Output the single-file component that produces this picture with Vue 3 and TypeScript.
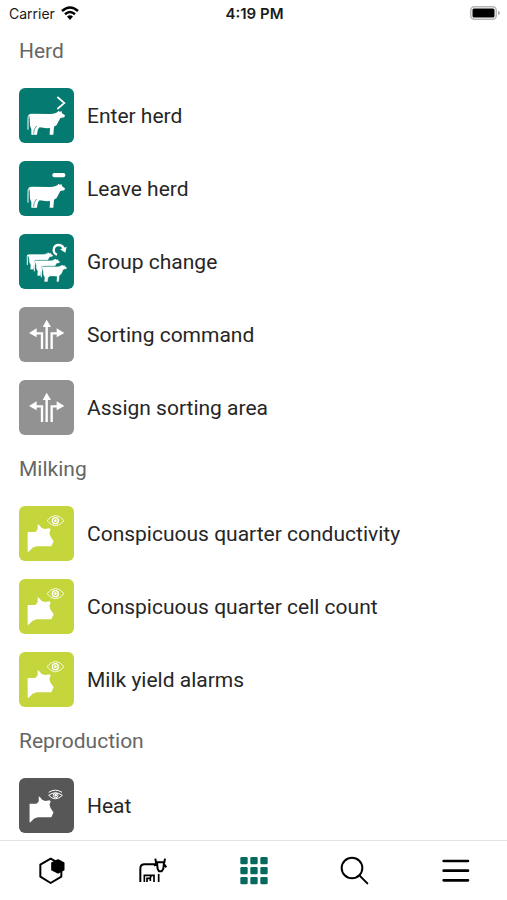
<script setup lang="ts">
type IconName = 'enter' | 'leave' | 'group' | 'sort' | 'watch' | 'heat'

interface Entry {
  label: string
  icon: IconName
}

interface Section {
  title: string
  tone: string
  entries: Entry[]
}

const sections: Section[] = [
  {
    title: 'Herd',
    tone: 'teal',
    entries: [
      { label: 'Enter herd', icon: 'enter' },
      { label: 'Leave herd', icon: 'leave' },
      { label: 'Group change', icon: 'group' },
      { label: 'Sorting command', icon: 'sort' },
      { label: 'Assign sorting area', icon: 'sort' },
    ],
  },
  {
    title: 'Milking',
    tone: 'lime',
    entries: [
      { label: 'Conspicuous quarter conductivity', icon: 'watch' },
      { label: 'Conspicuous quarter cell count', icon: 'watch' },
      { label: 'Milk yield alarms', icon: 'watch' },
    ],
  },
  {
    title: 'Reproduction',
    tone: 'dark',
    entries: [{ label: 'Heat', icon: 'heat' }],
  },
]

const toneOf = (section: Section, entry: Entry): string =>
  entry.icon === 'sort' ? 'grey' : section.tone

const gridCells = [0, 1, 2, 3, 4, 5, 6, 7, 8].map((i) => ({
  x: 60 + (i % 3) * 30,
  y: 66 + Math.floor(i / 3) * 30,
}))
</script>

<template>
  <div class="screen">
    <svg class="defs" aria-hidden="true">
      <symbol id="cow" viewBox="0 0 120 80" overflow="visible">
        <path
          d="M4 9 Q6 6 12 6 L66 7 Q78 7 84 4 L90 1 L92 -3 L96 0 L102 -1 L103 5 L112 11 L110 17 L98 19 L92 30 L87 40 L79 45 L77 69 L66 69 L67 49 L58 50 L36 47 L31 53 L29 62 L28 69 L11 69 L11 53 L7 42 L6 20 Z"
          fill="#fff"
        />
        <path d="M5 9 Q0 14 1 24 L1 54" fill="none" stroke="#fff" stroke-width="3" />
        <path d="M18 66 L20 53 L27 43" fill="none" stroke="var(--tone)" stroke-width="2" />
      </symbol>
      <symbol id="cow-small" viewBox="0 0 80 52" overflow="visible">
        <path
          d="M1 4 Q3 1 8 1 H48 Q56 1 60 -2 L64 -4 L67 -2 L72 -3 L73 1 L79 5 L77 9 L68 11 L62 24 L56 29 L54 48 H46 L47 32 L28 31 L22 35 L21 48 H9 L10 34 L6 26 L5 13 Z"
          fill="#fff"
          stroke="var(--tone)"
          stroke-width="2"
        />
        <path d="M2 4 Q0 8 1 14 V34" fill="none" stroke="#fff" stroke-width="3" />
      </symbol>
    </svg>

    <header class="status">
      <div class="carrier">
        <span>Carrier</span>
        <svg class="wifi" viewBox="0 0 18 14" aria-label="Wi-Fi">
          <path d="M1 5 Q9 -2 17 5" fill="none" stroke="#000" stroke-width="2.6" />
          <path d="M4 8.200 Q9 3.700 14 8.200" fill="none" stroke="#000" stroke-width="2.500" />
          <path d="M6 10.600 Q9 8 12 10.600 L9 14 Z" />
        </svg>
      </div>
      <time class="clock">4:19 PM</time>
      <svg class="battery" viewBox="0 0 30 14" aria-label="Battery full">
        <rect x="0.750" y="0.750" width="25.500" height="12.500" rx="3.500" fill="#fff" stroke="#b5b5b5" stroke-width="1.500" />
        <rect x="2.500" y="2.500" width="22" height="9" rx="1.500" />
        <path d="M28 4.800 Q30 5.500 30 7 Q30 8.500 28 9.200 Z" fill="#aaa" />
      </svg>
    </header>

    <main class="content">
      <section v-for="section in sections" :key="section.title" class="section">
        <h2 class="title">{{ section.title }}</h2>
        <ul class="list">
          <li v-for="entry in section.entries" :key="entry.label">
            <button type="button" class="row">
              <span class="tile" :class="toneOf(section, entry)">
                <svg viewBox="15 16 165 165" aria-hidden="true">
                  <template v-if="entry.icon === 'enter'">
                    <use href="#cow" x="41" y="87" width="120" height="80" />
                    <path d="M130 43 L151 61 L130 79" fill="none" stroke="#fff" stroke-width="5" />
                  </template>
                  <template v-else-if="entry.icon === 'leave'">
                    <use href="#cow" x="41" y="87" width="120" height="80" />
                    <rect x="115" y="52" width="39" height="13" rx="6" fill="#fff" />
                  </template>
                  <template v-else-if="entry.icon === 'group'">
                    <use href="#cow-small" x="39" y="75" width="80" height="52" />
                    <use href="#cow-small" x="60" y="94" width="80" height="52" />
                    <use href="#cow-small" x="81" y="112" width="80" height="52" />
                    <path d="M129 78 A15 15 0 1 1 149 62" fill="none" stroke="#fff" stroke-width="7" />
                    <path d="M138 62 L158 54 L154 72 Z" fill="#fff" />
                  </template>
                  <template v-else-if="entry.icon === 'sort'">
                    <path d="M98 142 V72 M84 142 V95 H64 M113 142 V95 H133" fill="none" stroke="#fff" stroke-width="7" />
                    <path d="M98 54 L111 76 H86 Z M45 94 L68 80 V107 Z M151 94 L128 80 V107 Z" fill="#fff" />
                  </template>
                  <template v-else>
                    <path
                      d="M71 70 L76 74 L83 82 L93 85 L106 83 L110 87 L106 96 L109 107 L119 122 L112 137 H68 L56 141 L43 154 L41 152 V94 H64 L71 86 Z"
                      fill="#fff"
                      :transform="entry.icon === 'heat' ? 'translate(9 5) scale(.92 .94)' : undefined"
                    />
                    <g v-if="entry.icon === 'watch'" fill="none" stroke="#fff">
                      <path d="M99 60 Q124 29 150 60 Q124 91 99 60 Z" stroke-width="2.500" />
                      <circle cx="124" cy="60" r="9" stroke-width="4" />
                      <circle cx="124" cy="60" r="2" stroke-width="4" />
                    </g>
                    <g v-else fill="none" stroke="#fff" stroke-width="3">
                      <path d="M104 59 Q124 46 144 59 M104 68 Q124 53 145 68 Q124 89 104 68 Z" />
                      <circle cx="125" cy="68" r="7" />
                      <circle cx="125" cy="68" r="2" stroke-width="4" />
                    </g>
                  </template>
                </svg>
              </span>
              <span class="label">{{ entry.label }}</span>
            </button>
          </li>
        </ul>
      </section>
    </main>

    <nav class="tabs" aria-label="Main">
      <button type="button" class="tab" aria-label="Overview">
        <svg viewBox="47 63 90 90">
          <path d="M91 71 L123 89 V125 L91 144 L60 125 V89 Z" fill="none" stroke="#000" stroke-width="6" stroke-linejoin="round" />
          <path d="M113 75 L130 84 V104 L113 113 L95 104 V84 Z" stroke="#000" stroke-width="5" stroke-linejoin="round" />
        </svg>
      </button>
      <button type="button" class="tab" aria-label="Animals">
        <svg viewBox="351 63 90 90" fill="none" stroke="#000" stroke-width="6">
          <path d="M361 141 V101 Q361 88 374 88 H407" />
          <path d="M373 141 V121 H402 V141 M381 141 V130 H390 L394 121 M391 128 V138 M416 117 V141" stroke-width="5" />
          <path d="M406 71 L408 82 H433 L435 71 M402 92 L411 86 M439 97 L431 86 M411 83 L413 102 L417 109 H425 L430 101 L432 83" stroke-width="6" />
        </svg>
      </button>
      <button type="button" class="tab" aria-label="Actions" aria-current="page">
        <svg viewBox="56 63 90 90" fill="#07685f">
          <rect v-for="cell in gridCells" :key="`${cell.x}-${cell.y}`" :x="cell.x" :y="cell.y" width="22" height="22" rx="4" />
        </svg>
      </button>
      <button type="button" class="tab" aria-label="Search">
        <svg viewBox="360 63 90 90" fill="none" stroke="#000" stroke-width="6" stroke-linecap="round">
          <circle cx="396" cy="99" r="31" />
          <path d="M419 122 L442 145" />
        </svg>
      </button>
      <button type="button" class="tab" aria-label="Menu">
        <svg viewBox="664 63 90 90" fill="none" stroke="#000" stroke-width="8" stroke-linecap="round">
          <path d="M672 78 H745 M672 107 H745 M672 136 H745" />
        </svg>
      </button>
    </nav>
  </div>
</template>

<style>
body {
  margin: 0;
  background: #fff;
}
</style>

<style scoped>
.screen {
  display: flex;
  flex-direction: column;
  height: 100vh;
  background: #fff;
  color: #262626;
  font-family: Roboto, "Liberation Sans", sans-serif;
}

.defs {
  display: none;
}

button {
  margin: 0;
  padding: 0;
  border: 0;
  background: none;
  color: inherit;
  font: inherit;
  text-align: left;
}

.status {
  display: grid;
  grid-template-columns: 1fr auto 1fr;
  align-items: center;
  flex: none;
  height: 26px;
  padding: 0 7px 0 9px;
  box-sizing: border-box;
  color: #1a1a1a;
  font-family: Inter, "Liberation Sans", sans-serif;
  font-size: 14px;
}

.carrier {
  display: flex;
  align-items: center;
  gap: 6px;
}

.wifi {
  width: 18px;
  height: 14px;
}

.clock {
  font-size: 15px;
  font-weight: 600;
}

.battery {
  width: 30px;
  height: 14px;
  justify-self: end;
}

.content {
  flex: 1;
  min-height: 0;
  overflow-y: auto;
  scrollbar-width: none;
  padding: 13px 19px 6px;
}

.section + .section {
  margin-top: 22px;
}

.title {
  margin: 0 0 25px;
  color: #666;
  font-size: 21px;
  font-weight: 400;
  line-height: 24px;
}

.list {
  display: flex;
  flex-direction: column;
  gap: 18px;
  margin: 0;
  padding: 0;
  list-style: none;
}

.row {
  display: flex;
  align-items: center;
  gap: 13px;
  width: 100%;
}

.tile {
  flex: none;
  width: 55px;
  height: 55px;
  border-radius: 6px;
  background: var(--tone);
}

.tile svg {
  display: block;
}

.teal {
  --tone: #057a70;
}

.grey {
  --tone: #929292;
}

.lime {
  --tone: #c5d63d;
}

.dark {
  --tone: #575757;
}

.label {
  font-size: 21px;
  line-height: 24px;
}

.tabs {
  display: flex;
  flex: none;
  height: 60px;
  box-sizing: border-box;
  border-top: 1px solid #e4e4e4;
}

.tab {
  display: flex;
  flex: 1;
  align-items: center;
  justify-content: center;
}

.tab svg {
  width: 30px;
  height: 30px;
}
</style>
